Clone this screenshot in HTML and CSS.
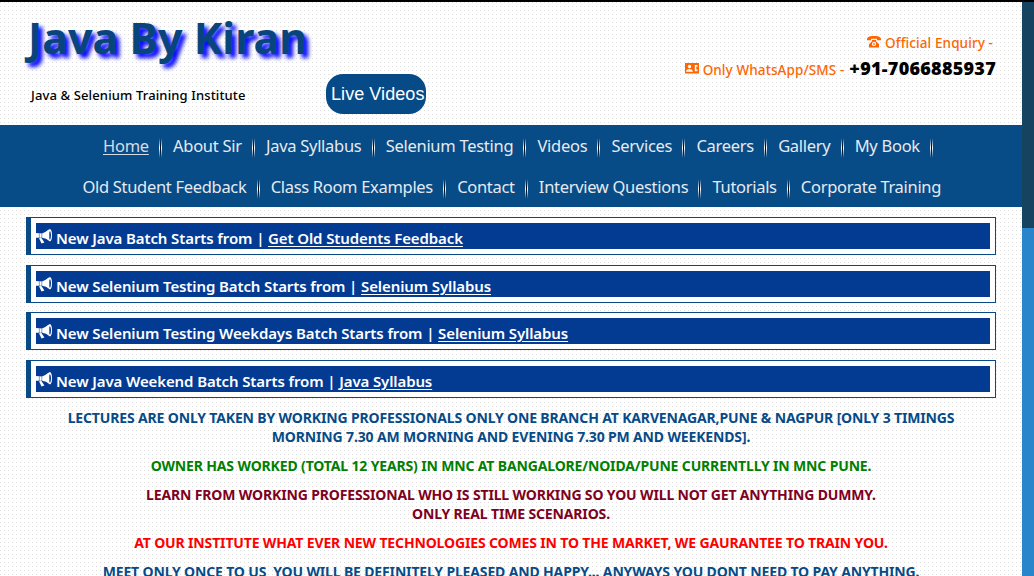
FILE: index.html
```html
<!DOCTYPE html>
<html lang="en">
<head>
<meta charset="utf-8">
<title>Java By Kiran</title>
<link rel="stylesheet" href="styles.css">
</head>
<body>
<svg class="defs" aria-hidden="true">
  <symbol id="horn" viewBox="0 0 16 15">
    <path fill="currentColor" fill-rule="evenodd" d="M0 4.1 6 4.6Q9.5 3.4 12 1.1L14 .1Q16 1 16 6.2T14 12.4Q10 9 6 8.7L0 8.8ZM13.3 3.2V9.8L14 11Q15 8.5 15 6.2T14 2Z"/>
    <path fill="currentColor" d="M3 9.2 5.4 9 8.4 13.4 5.5 14.4Z"/>
    <path stroke="#033b93" stroke-width=".5" d="M3.3 4.3V9M5.8 4.6V9"/>
  </symbol>
</svg>
<div class="layout">
  <div class="page">
    <header class="header">
      <div class="brand">
        <h1 class="logo">Java By Kiran</h1>
        <p class="tagline">Java &amp; Selenium Training Institute</p>
      </div>
      <a class="live">Live Videos</a>
      <div class="contact">
        <p class="enquiry"><svg class="phone" viewBox="0 0 14 12"><path fill="currentColor" fill-rule="evenodd" d="M0 4.3V2.8Q1.2.3 5 .1H9Q12.8.3 14 2.8V4.3H10V2.8H4V4.3ZM5 4H9V5.2L12 8.3V11.5H2V8.3L5 5.2ZM7 5.8A2.1 2.1 0 1 0 7 10A2.1 2.1 0 1 0 7 5.8M7 7A.9.9 0 1 1 7 8.8A.9.9 0 1 1 7 7"/></svg><span>Official Enquiry -</span></p>
        <p class="whatsapp"><svg class="card" viewBox="0 0 14 11"><path fill="currentColor" fill-rule="evenodd" d="M0 0H14V10.5H0ZM4.5 1.8A1.7 1.7 0 1 0 4.5 5.2A1.7 1.7 0 1 0 4.5 1.8M1.2 8.7H7.8V7.8Q7.2 6 4.5 6T1.2 7.8ZM9.8 2V8.2H12.5V6.5H11.3V3.7H12.5V2Z"/></svg><span>Only WhatsApp/SMS -</span><b class="number">+91-7066885937</b></p>
      </div>
    </header>
    <nav class="nav">
      <div class="row">
        <a class="active">Home</a><i></i><a>About Sir</a><i></i><a>Java Syllabus</a><i></i><a>Selenium Testing</a><i></i><a>Videos</a><i></i><a>Services</a><i></i><a>Careers</a><i></i><a>Gallery</a><i></i><a>My Book</a><i></i>
      </div>
      <div class="row second">
        <a>Old Student Feedback</a><i></i><a>Class Room Examples</a><i></i><a>Contact</a><i></i><a>Interview Questions</a><i></i><a>Tutorials</a><i></i><a>Corporate Training</a>
      </div>
    </nav>
    <main>
      <div class="notices">
        <div class="notice"><p><svg><use href="#horn"/></svg><span>New Java Batch Starts from | <u>Get Old Students Feedback</u></span></p></div>
        <div class="notice"><p><svg><use href="#horn"/></svg><span>New Selenium Testing Batch Starts from | <u>Selenium Syllabus</u></span></p></div>
        <div class="notice"><p><svg><use href="#horn"/></svg><span>New Selenium Testing Weekdays Batch Starts from | <u>Selenium Syllabus</u></span></p></div>
        <div class="notice"><p><svg><use href="#horn"/></svg><span>New Java Weekend Batch Starts from | <u>Java Syllabus</u></span></p></div>
      </div>
      <div class="copy">
        <p class="blue">LECTURES ARE ONLY TAKEN BY WORKING PROFESSIONALS ONLY ONE BRANCH AT KARVENAGAR,PUNE &amp; NAGPUR [ONLY 3 TIMINGS<br>MORNING 7.30 AM MORNING AND EVENING 7.30 PM AND WEEKENDS].</p>
        <p class="green">OWNER HAS WORKED (TOTAL 12 YEARS) IN MNC AT BANGALORE/NOIDA/PUNE CURRENTLLY IN MNC PUNE.</p>
        <p class="maroon">LEARN FROM WORKING PROFESSIONAL WHO IS STILL WORKING SO YOU WILL NOT GET ANYTHING DUMMY.<br>ONLY REAL TIME SCENARIOS.</p>
        <p class="red">AT OUR INSTITUTE WHAT EVER NEW TECHNOLOGIES COMES IN TO THE MARKET, WE GAURANTEE TO TRAIN YOU.</p>
        <p class="blue">MEET ONLY ONCE TO US&nbsp; YOU WILL BE DEFINITELY PLEASED AND HAPPY... ANYWAYS YOU DONT NEED TO PAY ANYTHING.</p>
      </div>
    </main>
  </div>
  <div class="scroll"><div class="thumb"></div></div>
</div>
</body>
</html>
```
FILE: styles.css
```css
* { box-sizing: border-box; }
body { margin: 0; height: 576px; overflow: hidden; font-family: "Noto Sans", "Open Sans", sans-serif; }
p, h1 { margin: 0; }
.defs { display: none; }
.layout { display: flex; height: 576px; border-top: 2px solid #000; white-space: nowrap; }
.page {
  width: 1022px; height: 574px; overflow: hidden;
  background: #fff conic-gradient(from 270deg at 1px 1px, #dedede 25%, transparent 0) 0 0 / 4px 4px;
}
.scroll { width: 12px; background: #2985cb; }
.thumb { height: 226px; background: #154360; }
.header { display: flex; height: 123px; padding-left: 26px; }
.brand { width: 300px; }
.logo { padding: 6px 0 0 2px; font-size: 43px; line-height: 60px; letter-spacing: 0; color: #07457c; text-shadow: 4px 4px 4px #00f; }
.tagline { padding: 17px 0 0 5px; font-size: 13px; line-height: 20px; font-weight: 500; letter-spacing: .13px; color: #000; }
.live { width: 100px; height: 40px; margin-top: 72px; border-radius: 17px; background: #064b88; color: #fff; font: 18px/40px "Liberation Sans", Arial, sans-serif; padding-left: 5px; letter-spacing: .07px; }
.contact { flex: 1; padding: 30px 26px 0 0; color: #ff6600; font-size: 13.5px; font-weight: 500; letter-spacing: .1px; display: flex; flex-direction: column; align-items: flex-end; }
.contact p { display: flex; align-items: center; height: 22px; }
.contact .enquiry { margin-right: 3px; }
.contact .whatsapp { height: 28px; }
.whatsapp span { padding-top: 3px; }
.phone { width: 14px; height: 12px; margin: 0 4px 2px 0; }
.card { width: 14px; height: 11px; margin: 1px 4px 0 0; }
.number { margin-left: 5px; color: #000; font-size: 18px; font-weight: 900; letter-spacing: .27px; }
.nav { height: 82px; background: #074b87; color: #e6eaf0; font-size: 16.5px; letter-spacing: -.28px; }
.row { display: flex; height: 41px; padding-left: 103px; }
.row.second { padding-left: 82.5px; letter-spacing: -.31px; }
.row a { line-height: 42px; }
.row i { width: 3px; height: 20px; margin: 13px 11px 0 10.2px; background: linear-gradient(90deg, transparent 1px, #000 1px 2px, transparent 2px), #fff; -webkit-mask-image: linear-gradient(transparent, #000 50%, transparent); mask-image: linear-gradient(transparent, #000 50%, transparent); }
.active { text-decoration: underline; text-underline-offset: 2px; color: #d5dce5; }
.notices { padding: 10.3px 26px 0; display: grid; row-gap: 9.5px; }
.notice { height: 38px; border: 1px solid #064b88; border-left-width: 5px; padding: 5px; background: #fff; }
.notice p { height: 26px; display: flex; background: #033b93; color: #fff; font-size: 15px; font-weight: 600; line-height: 31px; }
.notice svg { width: 16px; height: 15px; margin: 6px 4px 0 0; }
.notice span { letter-spacing: -.11px; }
.notice u { text-underline-offset: 2px; text-decoration-thickness: 1px; }
.copy { padding-top: 10.2px; text-align: center; font-size: 14px; line-height: 19px; font-weight: 700; letter-spacing: -.15px; }
.copy p { margin-bottom: 10px; }
.blue { color: #064b88; }
.green { color: #008000; }
.maroon { color: #800020; }
.red { color: #f00; }
```
